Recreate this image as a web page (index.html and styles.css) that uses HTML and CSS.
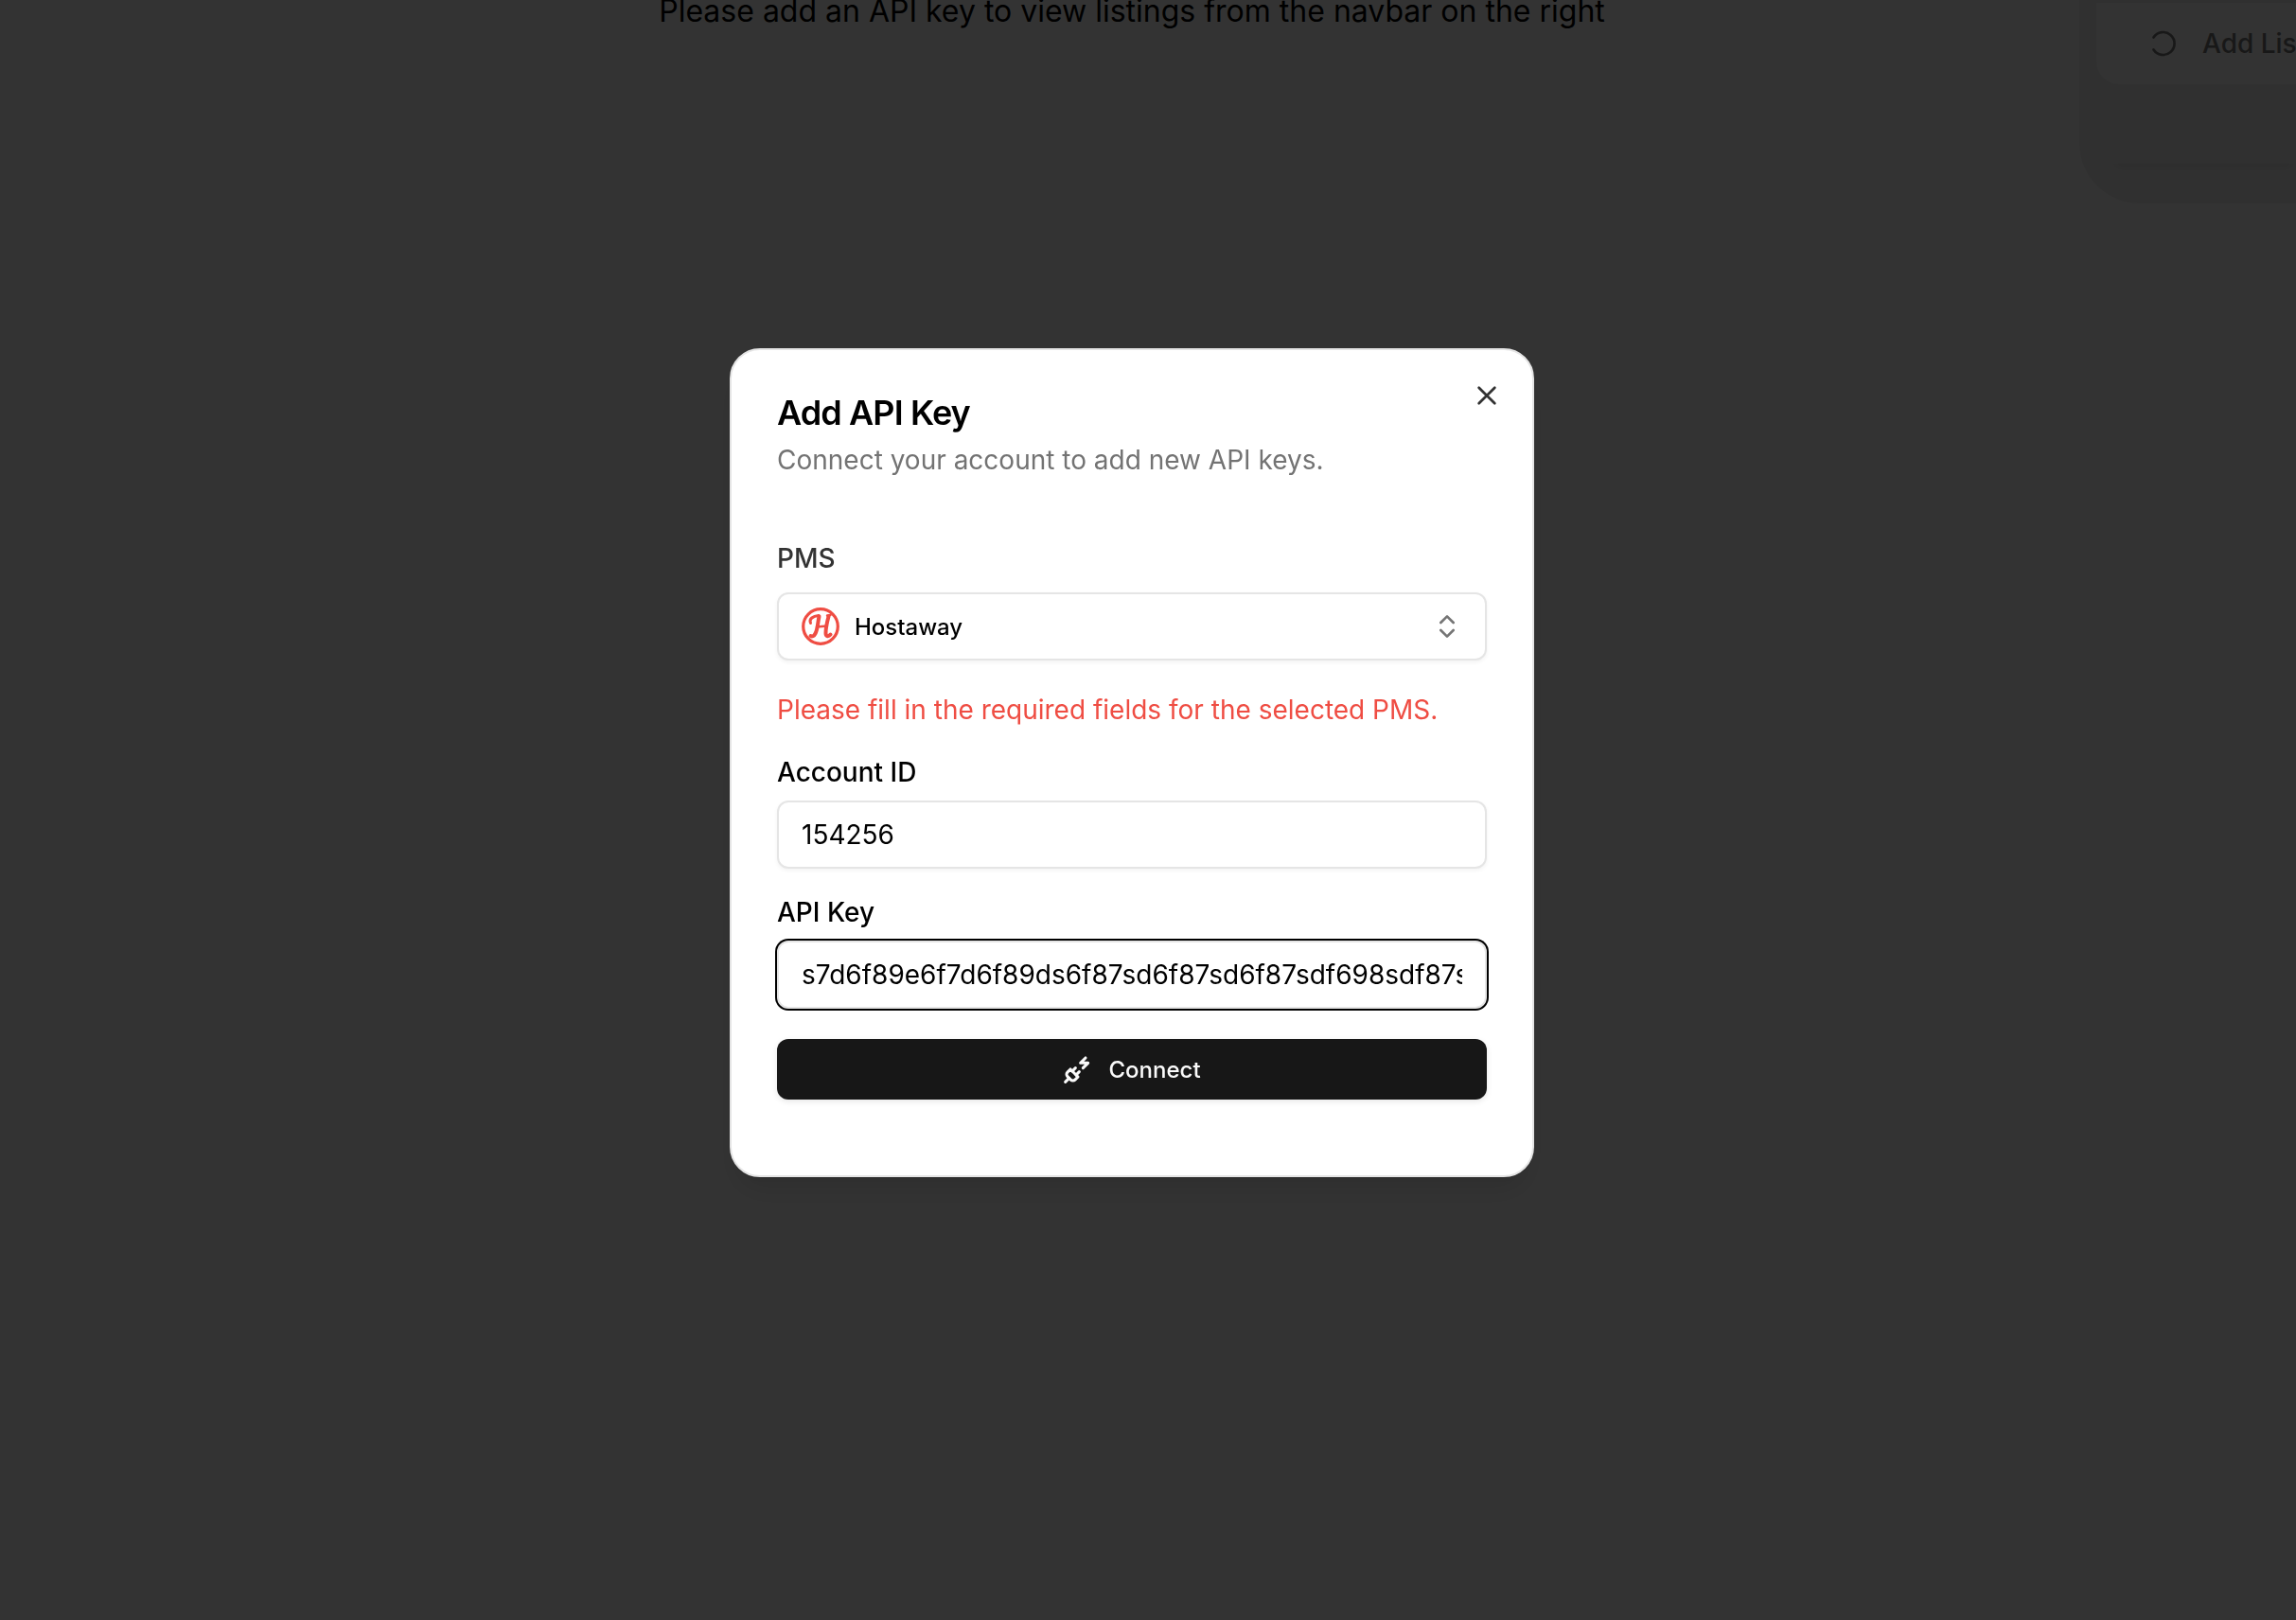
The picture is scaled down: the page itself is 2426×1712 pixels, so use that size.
FILE: index.html
```html
<!DOCTYPE html>
<html lang="en">
<head>
    <meta charset="UTF-8">
    <meta name="viewport" content="width=device-width, initial-scale=1.0">
    <title>Add API Key</title>
    <link rel="stylesheet" href="styles.css">
</head>
<body>
    <div class="page">
        <main class="listings">
            <p class="empty">Please add an API key to view listings from the navbar on the right</p>
        </main>
        <aside class="navbar">
            <button class="add-listing" type="button" disabled>
                <svg class="spinner" viewBox="0 0 32 32" fill="none" stroke="currentColor" stroke-width="2.7" stroke-linecap="round">
                    <path d="M6.5 9.5A12 12 0 1 1 6.5 22.5"/>
                </svg>
                Add Listing
            </button>
            <div class="navbar-shade"></div>
        </aside>
    </div>

    <div class="overlay">
        <div class="dialog" role="dialog" aria-modal="true" aria-labelledby="dialog-title">
            <button class="close" type="button" aria-label="Close">
                <svg class="icon" viewBox="0 0 15 15" fill="none" stroke="currentColor" stroke-width="1.3" stroke-linecap="round">
                    <path d="M3.6 3.6l7.8 7.8M11.4 3.6l-7.8 7.8"/>
                </svg>
            </button>

            <header class="dialog-header">
                <h2 class="title" id="dialog-title">Add API Key</h2>
                <p class="description">Connect your account to add new API keys.</p>
            </header>

            <form class="form">
                <div class="field">
                    <label class="label label-pms" for="pms">PMS</label>
                    <div class="select-wrap">
                        <select class="control select" id="pms">
                            <option>Hostaway</option>
                        </select>
                        <svg class="logo" viewBox="0 0 40 40" fill="none" stroke="currentColor" stroke-linecap="round">
                            <circle cx="20" cy="20" r="18.3" stroke-width="3.2"/>
                            <path d="M9.5 16.5C7.5 12 12 9 18 8.500" stroke-width="3"/>
                            <path d="M18.500 9.500C17 16 17 23 14.500 27.500C13 30.500 11 31 9.500 30" stroke-width="4"/>
                            <path d="M28.500 9.500C27 15 25.500 22 25.500 27C25.500 31 28.500 31 30.500 28.500" stroke-width="4"/>
                            <path d="M27 8.500L30.500 8M16 20.500L27 19.500" stroke-width="2.400"/>
                        </svg>
                        <svg class="icon chevrons" viewBox="0 0 24 24" fill="none" stroke="currentColor" stroke-width="2" stroke-linecap="round" stroke-linejoin="round">
                            <path d="m7 15 5 5 5-5"/>
                            <path d="m7 9 5-5 5 5"/>
                        </svg>
                    </div>
                </div>

                <p class="error">Please fill in the required fields for the selected PMS.</p>

                <div class="field">
                    <label class="label" for="account-id">Account ID</label>
                    <input class="control" id="account-id" type="text" value="154256">
                </div>

                <div class="field">
                    <label class="label" for="api-key">API Key</label>
                    <input class="control active" id="api-key" type="text" value="s7d6f89e6f7d6f89ds6f87sd6f87sd6f87sdf698sdf87sd6f87">
                </div>

                <button class="connect" type="button">
                    <svg class="icon" viewBox="0 0 24 24" fill="none" stroke="currentColor" stroke-width="2.3" stroke-linecap="round" stroke-linejoin="round">
                        <path d="M6.3 20.3a2.4 2.4 0 0 0 3.4 0L12 18l-6-6-2.3 2.3a2.4 2.4 0 0 0 0 3.4Z"/>
                        <path d="m2 22 3-3"/>
                        <path d="M7.5 13.5 10 11"/>
                        <path d="M10.5 16.5 13 14"/>
                        <path d="m18 3-4 4h6l-4 4"/>
                    </svg>
                    Connect
                </button>
            </form>
        </div>
    </div>
</body>
</html>
```
FILE: styles.css
```css
* {
    box-sizing: border-box;
    margin: 0;
    padding: 0;
}

body {
    font-family: Inter, "Liberation Sans", sans-serif;
    font-size: 28px;
    line-height: 40px;
    color: #000;
    background-color: #fff;
    min-height: 100vh;
    overflow: hidden;
}

button,
input,
select {
    font-family: inherit;
}

.icon {
    display: block;
    width: 32px;
    height: 32px;
    flex-shrink: 0;
}

/* Page behind the dialog */
.page {
    display: grid;
    grid-template-columns: 195px 1fr 229px;
    align-items: start;
}

.listings {
    grid-column: 2;
}

.empty {
    font-size: 32px;
    line-height: 24px;
    text-align: center;
}

.navbar {
    padding: 3px 0 42px 18px;
    background-color: #f0f0f0;
    border-bottom-left-radius: 64px;
    overflow: hidden;
}

.add-listing {
    display: flex;
    align-items: center;
    gap: 26px;
    width: 100%;
    height: 86px;
    padding-left: 54px;
    border: none;
    border-bottom-left-radius: 24px;
    background-color: #fcfcfc;
    color: #7a7a7a;
    font-size: 28px;
    font-weight: 500;
    white-space: nowrap;
}

.spinner {
    width: 32px;
    height: 32px;
    flex-shrink: 0;
}

.navbar-shade {
    height: 84px;
    margin-left: 16px;
    box-shadow: 0 8px 8px -4px rgba(0, 0, 0, 0.06);
    clip-path: inset(84px 0 -16px 0);
}

/* Dialog */
.overlay {
    position: fixed;
    inset: 0;
    display: flex;
    align-items: center;
    justify-content: center;
    padding: 0 34px 100px 0;
    background-color: rgba(0, 0, 0, 0.8);
}

.dialog {
    position: relative;
    width: 100%;
    max-width: 850px;
    padding: 48px 48px 80px;
    border: 2px solid #e5e5e5;
    border-radius: 32px;
    background-color: #fff;
    box-shadow: 0 20px 30px -6px rgba(0, 0, 0, 0.1), 0 8px 12px -8px rgba(0, 0, 0, 0.1);
}

.close {
    position: absolute;
    top: 32px;
    right: 32px;
    border: none;
    background: none;
    color: #333;
    cursor: pointer;
}

.dialog-header {
    display: flex;
    flex-direction: column;
    gap: 12px;
    margin-bottom: 64px;
}

.title {
    font-size: 36px;
    font-weight: 600;
    line-height: 36px;
    letter-spacing: -0.025em;
}

.description {
    color: #737373;
}

.form {
    display: flex;
    flex-direction: column;
    gap: 32px;
}

.field {
    display: flex;
    flex-direction: column;
    gap: 16px;
}

.label {
    font-weight: 500;
    line-height: 28px;
}

.label-pms {
    line-height: 40px;
    color: #333;
}

.control {
    display: block;
    width: 100%;
    height: 72px;
    padding: 0 24px;
    border: 2px solid #e5e5e5;
    border-radius: 12px;
    background-color: #fff;
    box-shadow: 0 2px 4px rgba(0, 0, 0, 0.05);
    color: #000;
    font-size: 28px;
    outline: none;
}

.control.active {
    box-shadow: 0 0 0 2px #000;
}

.select-wrap {
    position: relative;
}

.select {
    appearance: none;
    padding-left: 80px;
    font-size: 24px;
    font-weight: 500;
    cursor: pointer;
}

.logo {
    position: absolute;
    top: 16px;
    left: 26px;
    width: 40px;
    height: 40px;
    color: #ef4d43;
    pointer-events: none;
}

.chevrons {
    position: absolute;
    top: 20px;
    right: 26px;
    color: #757575;
    pointer-events: none;
}

.error {
    color: #ef4d43;
}

.connect {
    display: flex;
    align-items: center;
    justify-content: center;
    gap: 16px;
    height: 64px;
    border: none;
    border-radius: 12px;
    background-color: #171717;
    box-shadow: 0 2px 6px rgba(0, 0, 0, 0.1);
    color: #fafafa;
    font-size: 24px;
    font-weight: 500;
    cursor: pointer;
}
```
